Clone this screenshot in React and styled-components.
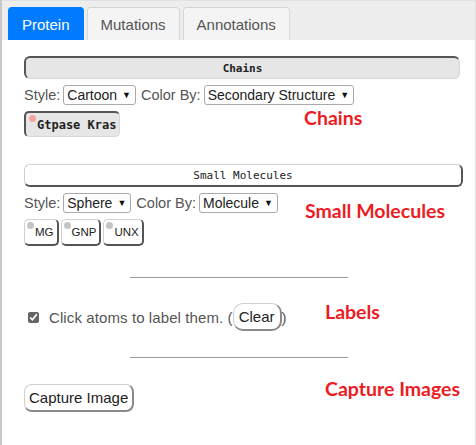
import styled, { createGlobalStyle } from 'styled-components';

const GlobalStyle = createGlobalStyle`
  body {
    margin: 0;
    background: #fff;
  }
`;

const Panel = styled.div`
  width: 476px;
  height: 445px;
  box-sizing: border-box;
  border-left: 2px solid #c9c9c9;
  border-right: 1px solid #e2e2e2;
  background: #fff;
  font-family: 'Liberation Sans', Arial, sans-serif;
  overflow: hidden;
`;

const TabBar = styled.div`
  height: 40px;
  box-sizing: border-box;
  background: #ededed;
  border-top: 1px solid #e2e2e2;
  padding: 6px 0 0 6px;
  display: flex;
  align-items: flex-end;
  gap: 3px;
`;

const Tab = styled.div`
  height: 33px;
  box-sizing: border-box;
  padding: 0 13px;
  display: flex;
  align-items: center;
  font-size: 15px;
  border: 1px solid ${p => (p.active ? '#007bff' : '#d6d6d6')};
  border-bottom: none;
  border-radius: 4px 4px 0 0;
  background: ${p => (p.active ? '#007bff' : '#f4f4f4')};
  color: ${p => (p.active ? '#fff' : '#555')};
`;

const Content = styled.div`
  padding: 16px 0 0 22px;
`;

const SectionBar = styled.div`
  width: ${p => p.width}px;
  height: 23px;
  box-sizing: border-box;
  border-radius: 6px;
  display: flex;
  align-items: center;
  justify-content: center;
  font-family: 'DejaVu Sans Mono', 'Liberation Mono', monospace;
  font-size: 11px;
  color: #222;
  font-weight: ${p => (p.pressed ? 'bold' : 'normal')};
  background: ${p => (p.pressed ? '#e6e6e6' : '#fff')};
  border-top: ${p => (p.pressed ? '2px solid #555' : '1px solid #d0d0d0')};
  border-left: ${p => (p.pressed ? '2px solid #555' : '1px solid #d0d0d0')};
  border-bottom: ${p => (p.pressed ? '1px solid #d8d8d8' : '2px solid #555')};
  border-right: ${p => (p.pressed ? '1px solid #d8d8d8' : '2px solid #555')};
`;

const OptionRow = styled.div`
  display: flex;
  align-items: center;
  gap: 3px;
  margin-top: 6px;
  height: 20px;
  font-size: 14.5px;
  color: #555;
`;

const Label = styled.span``;

const Select = styled.div`
  height: 20px;
  box-sizing: border-box;
  border: 1px solid #a9a9a9;
  border-radius: 3px;
  padding: 0 4px 0 3px;
  display: flex;
  align-items: center;
  gap: 5px;
  font-size: 14px;
  color: #222;
  background: #fff;
  margin-right: 2px;
`;

const Arrow = styled.span`
  font-size: 9px;
  color: #111;
`;

const ItemRow = styled.div`
  display: flex;
  align-items: ${p => p.align || 'flex-start'};
  margin-top: ${p => p.top}px;
`;

const Chips = styled.div`
  display: flex;
  gap: 2px;
  width: ${p => p.width}px;
  flex-shrink: 0;
`;

const Chip = styled.div`
  height: ${p => (p.pressed ? 26 : 27)}px;
  box-sizing: border-box;
  display: flex;
  align-items: center;
  padding: ${p => (p.pressed ? '0 3px 0 3px' : '0 3px 0 2px')};
  border-radius: 5px;
  font-family: ${p => (p.pressed ? "'DejaVu Sans Mono', 'Liberation Mono', monospace" : "'Liberation Sans', Arial, sans-serif")};
  font-size: ${p => (p.pressed ? 12 : 11.5)}px;
  font-weight: ${p => (p.pressed ? 'bold' : 'normal')};
  color: #222;
  background: ${p => (p.pressed ? '#e6e6e6' : '#fff')};
  border-top: ${p => (p.pressed ? '2px solid #555' : '1px solid #d0d0d0')};
  border-left: ${p => (p.pressed ? '2px solid #555' : '1px solid #d0d0d0')};
  border-bottom: ${p => (p.pressed ? '1px solid #d8d8d8' : '2px solid #555')};
  border-right: ${p => (p.pressed ? '1px solid #d8d8d8' : '2px solid #555')};
`;

const Dot = styled.span`
  width: 7px;
  height: 7px;
  border-radius: 50%;
  background: ${p => p.color};
  align-self: flex-start;
  margin-top: 2px;
  margin-right: 1px;
  flex-shrink: 0;
`;

const Note = styled.div`
  font-family: Lato, 'Liberation Sans', sans-serif;
  font-weight: bold;
  font-size: 19.5px;
  color: #ed1c24;
  margin-top: ${p => p.top || 0}px;
  line-height: 22px;
`;

const Rule = styled.div`
  width: 218px;
  height: 1px;
  background: #9a9a9a;
  margin: ${p => p.top}px 0 0 106px;
`;

const CheckRow = styled.div`
  display: flex;
  align-items: center;
  width: 301px;
  flex-shrink: 0;
  padding-left: 4px;
  box-sizing: border-box;
  font-size: 15px;
  letter-spacing: 0.1px;
  color: #555;
`;

const Check = styled.input`
  width: 11px;
  height: 11px;
  margin: 0 10px 0 0;
  accent-color: #666;
`;

const Button = styled.button`
  height: 28px;
  box-sizing: border-box;
  padding: 0 ${p => p.pad}px;
  border-radius: ${p => p.radius}px;
  border: 1px solid #d0d0d0;
  border-bottom: 2px solid #8a8a8a;
  border-right: 2px solid #8a8a8a;
  background: #fff;
  font-family: 'Liberation Sans', Arial, sans-serif;
  font-size: 15px;
  letter-spacing: 0;
  color: #222;
`;

const App = () => {
  return <>
    <GlobalStyle />
    <Panel>
      <TabBar>
        <Tab active>Protein</Tab>
        <Tab>Mutations</Tab>
        <Tab>Annotations</Tab>
      </TabBar>
      <Content>
        <SectionBar pressed width={436}>Chains</SectionBar>
        <OptionRow>
          <Label>Style:</Label>
          <Select>Cartoon <Arrow>▼</Arrow></Select>
          <Label>Color By:</Label>
          <Select>Secondary Structure <Arrow>▼</Arrow></Select>
        </OptionRow>
        <ItemRow top={6}>
          <Chips width={280}>
            <Chip pressed><Dot color="#f5a39c" />Gtpase Kras</Chip>
          </Chips>
          <Note top={-4}>Chains</Note>
        </ItemRow>

        <ItemRow top={27}>
          <SectionBar width={439}>Small Molecules</SectionBar>
        </ItemRow>
        <OptionRow>
          <Label>Style:</Label>
          <Select>Sphere <Arrow>▼</Arrow></Select>
          <Label>Color By:</Label>
          <Select>Molecule <Arrow>▼</Arrow></Select>
        </OptionRow>
        <ItemRow top={6}>
          <Chips width={281}>
            <Chip><Dot color="#c4c4c4" />MG</Chip>
            <Chip><Dot color="#c4c4c4" />GNP</Chip>
            <Chip><Dot color="#c4c4c4" />UNX</Chip>
          </Chips>
          <Note top={-19}>Small Molecules</Note>
        </ItemRow>

        <Rule top={31} />
        <ItemRow top={25} align="center">
          <CheckRow>
            <Check type="checkbox" defaultChecked />
            <span>Click atoms to label them. (</span>
            <Button pad={5} radius={10}>Clear</Button>
            <span>)</span>
          </CheckRow>
          <Note top={-11}>Labels</Note>
        </ItemRow>
        <Rule top={26} />
        <ItemRow top={26}>
          <Chips width={301}>
            <Button pad={4} radius={8}>Capture Image</Button>
          </Chips>
          <Note top={-6}>Capture Images</Note>
        </ItemRow>
      </Content>
    </Panel>
  </>
};

export default App;
